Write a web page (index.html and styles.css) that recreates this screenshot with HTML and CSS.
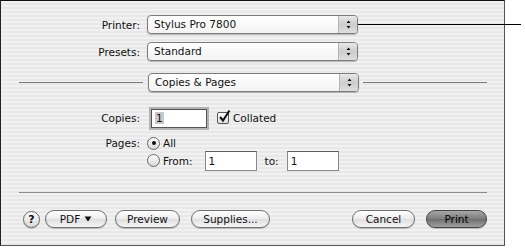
FILE: index.html
```html
<!DOCTYPE html>
<html lang="en">
<head>
    <meta charset="UTF-8">
    <meta name="viewport" content="width=device-width, initial-scale=1.0">
    <title>Print</title>
    <link rel="stylesheet" href="styles.css">
</head>
<body>
    <div class="dialog">
        <div class="field printer-row">
            <span class="label">Printer:</span>
            <div class="popup">
                <span class="popup-text">Stylus Pro 7800</span>
                <span class="popup-arrows">
                    <svg width="7" height="11" viewBox="0 0 7 11"><path d="M3.5 1.5 L5.5 4 L1.5 4 Z M3.5 9.5 L5.5 7 L1.5 7 Z" fill="#111"/></svg>
                </span>
            </div>
        </div>

        <div class="field presets-row">
            <span class="label">Presets:</span>
            <div class="popup">
                <span class="popup-text">Standard</span>
                <span class="popup-arrows">
                    <svg width="7" height="11" viewBox="0 0 7 11"><path d="M3.5 1.5 L5.5 4 L1.5 4 Z M3.5 9.5 L5.5 7 L1.5 7 Z" fill="#111"/></svg>
                </span>
            </div>
        </div>

        <div class="section-row">
            <span class="rule"></span>
            <div class="popup">
                <span class="popup-text">Copies &amp; Pages</span>
                <span class="popup-arrows">
                    <svg width="7" height="11" viewBox="0 0 7 11"><path d="M3.5 1.5 L5.5 4 L1.5 4 Z M3.5 9.5 L5.5 7 L1.5 7 Z" fill="#111"/></svg>
                </span>
            </div>
            <span class="rule"></span>
        </div>

        <div class="field copies-row">
            <span class="label">Copies:</span>
            <div class="text-input focused"><span class="selected">1</span></div>
            <span class="checkbox">
                <svg width="14" height="15" viewBox="0 0 14 15"><path d="M3 8 L6 11.5 L12.5 1.5" fill="none" stroke="#111" stroke-width="2"/></svg>
            </span>
            <span class="check-label">Collated</span>
        </div>

        <div class="field pages-row">
            <span class="label">Pages:</span>
            <span class="radio checked"></span>
            <span class="radio-label">All</span>
        </div>

        <div class="field from-row">
            <span class="label"></span>
            <span class="radio"></span>
            <span class="radio-label">From:</span>
            <div class="text-input small">1</div>
            <span class="to-label">to:</span>
            <div class="text-input small">1</div>
        </div>

        <div class="divider"></div>

        <div class="button-row">
            <span class="help">?</span>
            <span class="btn pdf">PDF
                <svg width="8" height="6" viewBox="0 0 8 6"><path d="M0.5 0.5 L7.5 0.5 L4 5.5 Z" fill="#111"/></svg>
            </span>
            <span class="btn preview">Preview</span>
            <span class="btn supplies">Supplies...</span>
            <span class="spacer"></span>
            <span class="btn cancel">Cancel</span>
            <span class="btn print">Print</span>
        </div>
    </div>

    <div class="callout"></div>
</body>
</html>
```

FILE: styles.css
```css
body {
    margin: 0;
    background: #fff;
    font-family: "DejaVu Sans", sans-serif;
    font-size: 10.5px;
    color: #111;
}
.dialog {
    width: 505px;
    height: 246px;
    box-sizing: border-box;
    border: 1px solid #555;
    border-top-color: #111;
    border-left-color: #222;
    padding: 14px 17px 0 18px;
    background: repeating-linear-gradient(#f1f1f1 0, #f1f1f1 2px, #e8e8e8 2px, #e8e8e8 4px);
}
.field {
    display: flex;
    align-items: center;
}
.label {
    width: 121px;
    margin-right: 7px;
    text-align: right;
    flex-shrink: 0;
}
.printer-row {
    height: 19px;
}
.presets-row {
    height: 19px;
    margin-top: 8px;
}
.popup {
    width: 211px;
    height: 19px;
    box-sizing: border-box;
    display: flex;
    border: 1px solid #7c7c7c;
    border-radius: 4px;
    background: linear-gradient(#ffffff, #f3f3f3);
    box-shadow: 0 1px 1px rgba(0,0,0,0.25);
    overflow: hidden;
    flex-shrink: 0;
}
.popup-text {
    flex: 1;
    padding-left: 6px;
    line-height: 17px;
}
.popup-arrows {
    width: 18px;
    display: flex;
    align-items: center;
    justify-content: center;
    border-left: 1px solid #b4b4b4;
    background: linear-gradient(#e9e9e9, #cdcdcd 50%, #dedede);
}
.section-row {
    display: flex;
    align-items: center;
    margin-top: 12px;
    height: 19px;
}
.section-row .rule {
    flex: 1;
    height: 1px;
    background: #7a7a7a;
}
.section-row .popup {
    margin: 0 4px 0 5px;
}
.copies-row {
    height: 20px;
    margin-top: 16px;
}
.text-input {
    height: 19px;
    box-sizing: border-box;
    border: 1px solid #8a8a8a;
    border-top-color: #5e5e5e;
    background: #fff;
    padding-left: 3px;
    line-height: 17px;
}
.text-input.focused {
    width: 56px;
    margin-left: 4px;
    border-color: #555;
    box-shadow: 0 0 0 2px #b3b3b3;
}
.selected {
    background: #c9c9c9;
    padding: 0 1px;
}
.checkbox {
    position: relative;
    width: 12px;
    height: 12px;
    box-sizing: border-box;
    border: 1px solid #555;
    border-radius: 2px;
    background: linear-gradient(#fff, #ddd);
    margin-left: 10px;
}
.checkbox svg {
    position: absolute;
    left: -1px;
    top: -4px;
}
.check-label {
    margin-left: 4px;
}
.pages-row {
    height: 14px;
    margin-top: 8px;
}
.from-row {
    height: 21px;
}
.radio {
    width: 13px;
    height: 13px;
    box-sizing: border-box;
    border: 1px solid #666;
    border-radius: 50%;
    background: linear-gradient(#fff, #d6d6d6);
    display: flex;
    align-items: center;
    justify-content: center;
    flex-shrink: 0;
}
.radio.checked::after {
    content: "";
    width: 4px;
    height: 4px;
    border-radius: 50%;
    background: #111;
}
.radio-label {
    margin-left: 3px;
}
.text-input.small {
    width: 52px;
    height: 20px;
    line-height: 18px;
}
.from-row .radio-label {
    margin-right: 12px;
}
.to-label {
    margin: 0 8px 0 8px;
}
.divider {
    height: 1px;
    background: #8a8a8a;
    margin-top: 21px;
}
.button-row {
    display: flex;
    align-items: center;
    margin-top: 17px;
    height: 18px;
}
.help {
    width: 17px;
    height: 17px;
    box-sizing: border-box;
    margin-left: 4px;
    border: 1px solid #6a6a6a;
    border-radius: 50%;
    background: linear-gradient(#fdfdfd, #d8d8d8);
    font-weight: bold;
    font-size: 11px;
    text-align: center;
    line-height: 15px;
    box-shadow: 0 1px 1px rgba(0,0,0,0.2);
}
.btn {
    height: 18px;
    box-sizing: border-box;
    border: 1px solid #707070;
    border-radius: 9px;
    background: linear-gradient(#ffffff, #ececec 50%, #dedede 51%, #f6f6f6);
    box-shadow: 0 1px 1px rgba(0,0,0,0.2);
    display: flex;
    align-items: center;
    justify-content: center;
    gap: 4px;
}
.pdf {
    width: 62px;
    margin-left: 5px;
}
.preview {
    width: 65px;
    margin-left: 8px;
}
.supplies {
    width: 79px;
    margin-left: 11px;
}
.spacer {
    flex: 1;
}
.cancel {
    width: 63px;
}
.print {
    width: 61px;
    margin-left: 11px;
    border-color: #444;
    color: #000;
    background: linear-gradient(#a8a8a8, #7c7c7c 50%, #6e6e6e 51%, #a0a0a0);
}
.callout {
    position: absolute;
    left: 358px;
    top: 24px;
    width: 163px;
    height: 1px;
    background: #000;
}
```
